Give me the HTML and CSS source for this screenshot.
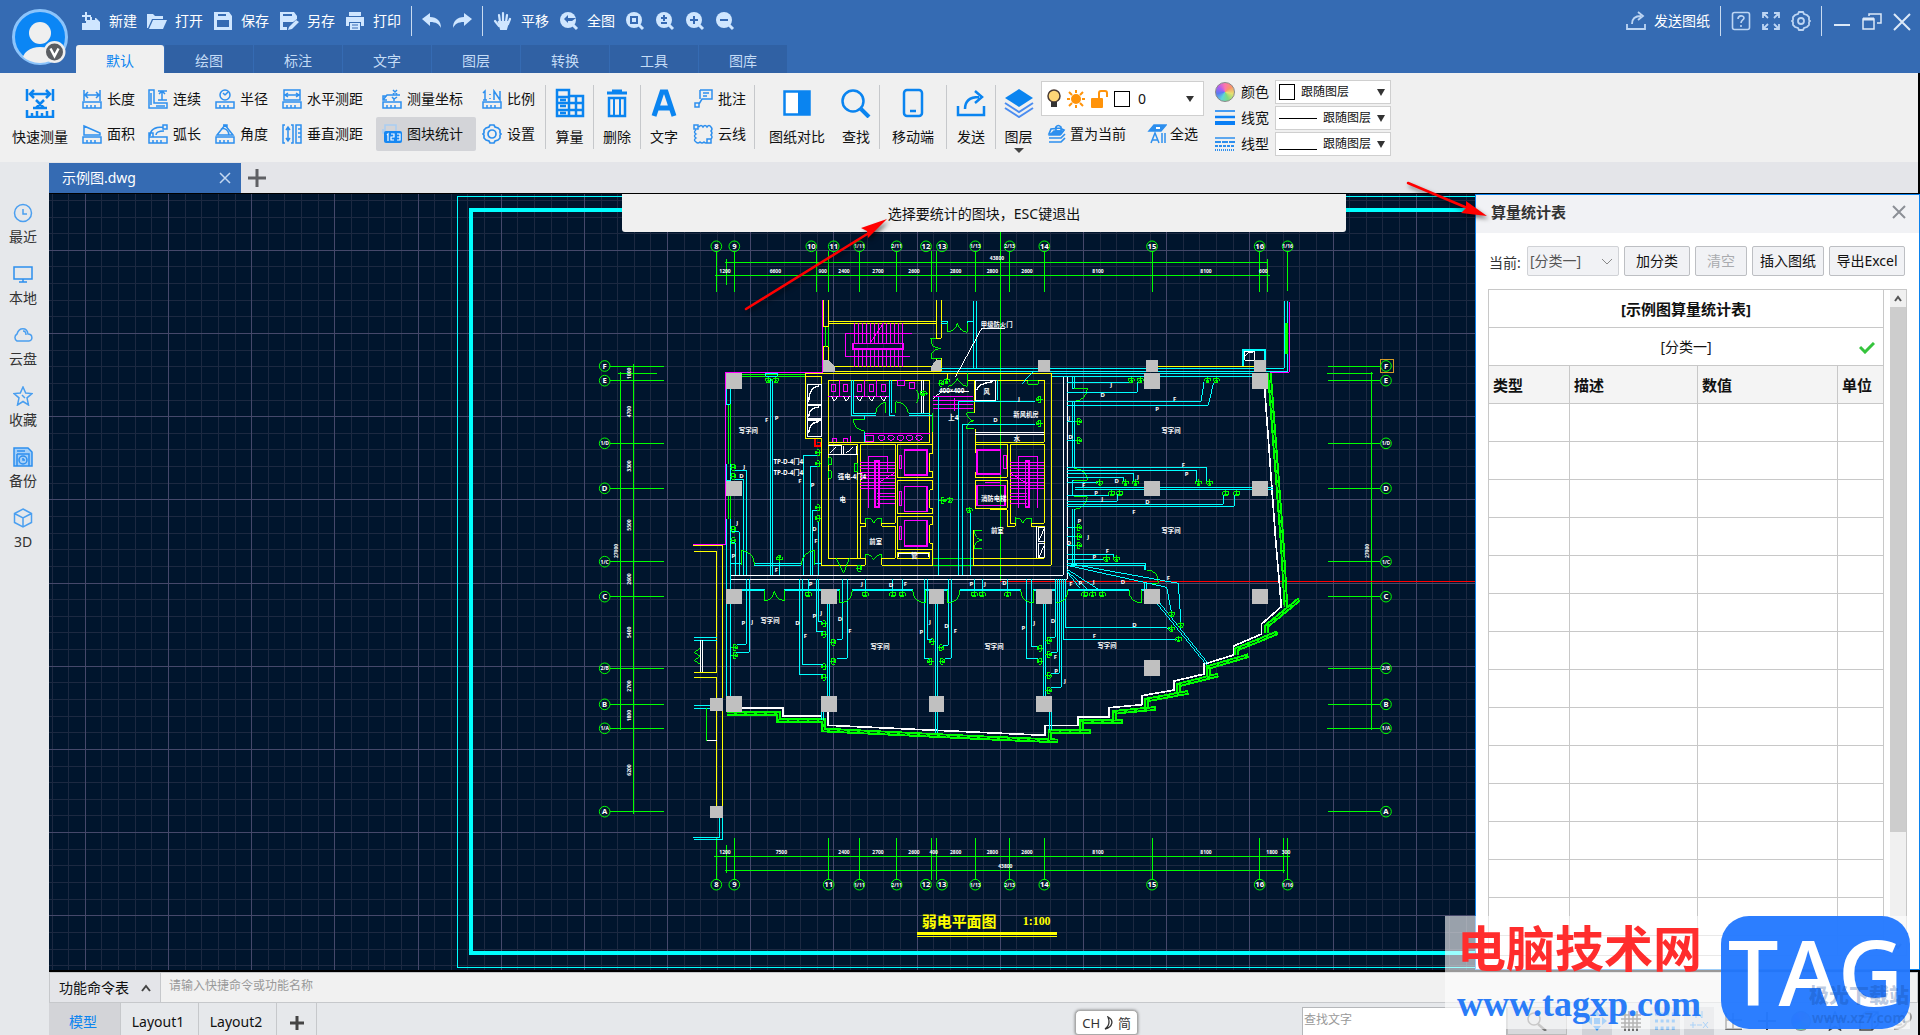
FILE: index.html
```html
<!DOCTYPE html>
<html lang="zh-Hans">
<head>
  <meta charset="UTF-8">
  <title>示例图.dwg</title>
  <link rel="stylesheet" href="styles.css">
</head>
<body>

  <header class="header">
    <div class="avatar">
      <svg width="58" height="58" viewBox="0 0 58 58">
        <defs><clipPath id="face"><circle cx="29" cy="29" r="26"/></clipPath></defs>
        <circle cx="29" cy="29" r="26.5" fill="#0b86f5" stroke="#8cc4fb" stroke-width="3"/>
        <g clip-path="url(#face)" fill="#efefef"><circle cx="29" cy="25" r="11"/><path d="M11 55C11 44 19 39 29 39s18 5 18 16z"/></g>
        <circle cx="43.500" cy="44" r="11" fill="#efefef"/><circle cx="43.500" cy="44" r="8.500" fill="#5a5d62"/>
        <path d="M39.500 40.500l4 7.500 4-7.500" fill="none" stroke="#fff" stroke-width="2.500"/>
      </svg>
    </div>
    <div class="header-main">
      <div class="quick-bar">
        <button class="quick"><svg class="icon" viewBox="0 0 20 20" fill="#cfe6ff"><path d="M9 6h2v3h3V7h1l4 4v8H1v-7h4V9h4z"/><path d="M5 1v9M1 5h9" stroke="#cfe6ff" stroke-width="2"/></svg>新建</button>
        <button class="quick"><svg class="icon" viewBox="0 0 20 20" fill="#cfe6ff"><path d="M0 3h6l2 2h8v3H5L1 17H0z"/><path d="M6 9h14l-4 9H2z"/></svg>打开</button>
        <button class="quick"><svg class="icon" viewBox="0 0 20 20" fill="#cfe6ff"><path fill-rule="evenodd" d="M1 1h15l3 4v14H1zM4 9v7h12V9zM5 3v2h8V3z"/></svg>保存</button>
        <button class="quick"><svg class="icon" viewBox="0 0 20 20" fill="#cfe6ff"><path fill-rule="evenodd" d="M1 1h14l3 4v3l-4 3H4v5h4v3H1zM4 3v2h9V3z"/><path d="M10 16l7-7 3 2-7 7-4 1z"/></svg>另存</button>
        <button class="quick"><svg class="icon" viewBox="0 0 20 20" fill="#cfe6ff"><path d="M4 1h12v4H4zM1 6h18v9h-3v-4H4v4H1zM5 12h10v7H5z"/><path d="M7 14h6M7 17h6" stroke="#3569b3"/></svg>打印</button>
        <span class="quick-sep"></span>
        <button class="quick" title="撤销"><svg class="icon" viewBox="0 0 20 20" fill="#cfe6ff"><path d="M0 8l8-6v4c7 0 11 4 11 11-2-4-5-6-11-6v4z"/></svg></button>
        <button class="quick" title="重做"><svg class="icon" viewBox="0 0 20 20" fill="#cfe6ff"><path d="M20 8l-8-6v4C5 6 1 10 1 17c2-4 5-6 11-6v4z"/></svg></button>
        <span class="quick-sep"></span>
        <button class="quick"><svg class="icon" viewBox="0 0 20 20" stroke="#cfe6ff" stroke-width="2.200" stroke-linecap="round"><path d="M6 4l1 7M10 2v8M14 4l-1 7M17 8l-2 5M2 10l4 5" fill="none"/><path d="M6 11h9l-2 7H8z" fill="#cfe6ff"/></svg>平移</button>
        <button class="quick"><svg class="icon" viewBox="0 0 20 20"><circle cx="9" cy="9" r="8" fill="#cfe6ff"/><path d="M14 14l4 4" stroke="#cfe6ff" stroke-width="3"/><path d="M17 7H9V4L5 8l4 4v-2h4" fill="#3569b3"/></svg>全图</button>
        <button class="quick" title="窗口缩放"><svg class="icon" viewBox="0 0 20 20"><circle cx="9" cy="9" r="8" fill="#cfe6ff"/><path d="M14 14l4 4" stroke="#cfe6ff" stroke-width="3"/><path d="M6 6h6v6H6z" fill="none" stroke="#3569b3" stroke-width="2"/></svg></button>
        <button class="quick" title="实时缩放"><svg class="icon" viewBox="0 0 20 20"><circle cx="9" cy="9" r="8" fill="#cfe6ff"/><path d="M14 14l4 4" stroke="#cfe6ff" stroke-width="3"/><path d="M6 7h6M9 4v6M6 12h6" stroke="#3569b3" stroke-width="2"/></svg></button>
        <button class="quick" title="放大"><svg class="icon" viewBox="0 0 20 20"><circle cx="9" cy="9" r="8" fill="#cfe6ff"/><path d="M14 14l4 4" stroke="#cfe6ff" stroke-width="3"/><path d="M5 9h8M9 5v8" stroke="#3569b3" stroke-width="2"/></svg></button>
        <button class="quick" title="缩小"><svg class="icon" viewBox="0 0 20 20"><circle cx="9" cy="9" r="8" fill="#cfe6ff"/><path d="M14 14l4 4" stroke="#cfe6ff" stroke-width="3"/><path d="M5 9h8" stroke="#3569b3" stroke-width="2"/></svg></button>

        <div class="window-bar">
          <button class="quick"><svg class="icon" viewBox="0 0 20 20" fill="none" stroke="#bdd5f3" stroke-width="1.800"><path d="M1 13v5h18v-5M6 13c0-5 3-8 9-8M12 1l5 4-5 4"/></svg>发送图纸</button>
          <span class="quick-sep"></span>
          <button class="quick" title="帮助"><svg class="icon" viewBox="0 0 20 20" fill="none" stroke="#bdd5f3" stroke-width="1.600"><rect x="1.500" y="1.500" width="17" height="17" rx="2"/><path d="M7 8c0-4 6-4 6-1 0 2-3 2-3 5M10 14v2"/></svg></button>
          <button class="quick" title="全屏"><svg class="icon" viewBox="0 0 20 20" fill="none" stroke="#bdd5f3" stroke-width="1.800"><path d="M2 7V2h5M13 2h5v5M18 13v5h-5M7 18H2v-5M2 2l5 5M18 2l-5 5M18 18l-5-5M2 18l5-5"/></svg></button>
          <button class="quick" title="设置"><svg class="icon" viewBox="0 0 20 20" fill="none" stroke="#bdd5f3" stroke-width="1.800"><path d="M8 1h4l1 2 3 1 2 2v3l1 1-1 1v3l-2 2-3 1-1 2H8l-1-2-3-1-2-2v-3l-1-1 1-1V6l2-2 3-1z"/><circle cx="10" cy="10" r="3"/></svg></button>
          <span class="quick-sep"></span>
          <button class="quick" title="最小化"><svg class="icon" viewBox="0 0 20 20" stroke="#dce9f8" stroke-width="2"><path d="M2 14h16"/></svg></button>
          <button class="quick" title="还原"><svg class="icon" viewBox="0 0 20 20" fill="none" stroke="#dce9f8" stroke-width="1.500"><path d="M1 8h11v10H1zM7 5V3h12v9h-4"/><path d="M1 8h11" stroke-width="3"/></svg></button>
          <button class="quick" title="关闭"><svg class="icon" viewBox="0 0 20 20" stroke="#dce9f8" stroke-width="2"><path d="M2 3l16 16M18 3L2 19"/></svg></button>
        </div>
      </div>
      <nav class="menu-tabs">
        <a href="#" class="menu-tab active">默认</a>
        <a href="#" class="menu-tab">绘图</a>
        <a href="#" class="menu-tab">标注</a>
        <a href="#" class="menu-tab">文字</a>
        <a href="#" class="menu-tab">图层</a>
        <a href="#" class="menu-tab">转换</a>
        <a href="#" class="menu-tab">工具</a>
        <a href="#" class="menu-tab">图库</a>
      </nav>
    </div>
  </header>

  <div class="ribbon">
    <button class="big wide first"><svg class="big-icon" viewBox="0 0 30 30" fill="none" stroke="#0a84f0" stroke-width="2.500"><path d="M2 1v12M28 1v12M5 6h20M9 2L5 6l4 4M21 2l4 4-4 4M11 12l8 8M19 12l-8 8M8 20h14" /><path d="M2 22v7h26v-7M7 29v-4M12 29v-6M17 29v-4M22 29v-6"/></svg>快速测量</button>

    <div class="tools measure">
      <button class="tool"><svg class="icon" viewBox="0 0 20 20" fill="none" stroke="#2d8fee" stroke-width="1.500"><path d="M2 1v11M18 1v11M3 6h14M6 3L3 6l3 3M14 3l3 3-3 3M1 13h18v6H1zM5 16v3M9 16v3M13 16v3"/></svg>长度</button>
      <button class="tool"><svg class="icon" viewBox="0 0 20 20" fill="none" stroke="#2d8fee" stroke-width="1.500"><path d="M1 1h5v13h13v5H1zM10 2h9M14 2v9M10 11h9M11 5l3-3 3 3M3 4v12M8 17h9"/></svg>连续</button>
      <button class="tool"><svg class="icon" viewBox="0 0 20 20" fill="none" stroke="#2d8fee" stroke-width="1.500"><circle cx="10" cy="6" r="5"/><path d="M10 6l3-3M8 4l2 2M1 13h18v6H1zM5 16v3M9 16v3M13 16v3"/></svg>半径</button>
      <button class="tool"><svg class="icon" viewBox="0 0 20 20" fill="none" stroke="#2d8fee" stroke-width="1.500"><path d="M2 1v10h16V1zM3 6h14M6 4L3 6l3 2M14 4l3 2-3 2M1 13h18v6H1zM5 16v3M9 16v3M13 16v3"/></svg>水平测距</button>
      <button class="tool"><svg class="icon" viewBox="0 0 20 20" fill="none" stroke="#2d8fee" stroke-width="1.500"><path d="M1 11l4-5h13M4 7H1v4h4M11 1l4 4M15 1l-4 4M10 8l2 2 3-2M12 10v2M1 13h18v6H1zM5 16v3M9 16v3M13 16v3"/></svg>测量坐标</button>
      <button class="tool"><svg class="icon" viewBox="0 0 20 20" fill="none" stroke="#2d8fee" stroke-width="1.500"><path d="M1 4l2-2v9M1 11h4M8 5v1M8 9v1M12 11V2l6 9V2M1 13h18v6H1zM5 16v3M9 16v3M13 16v3"/></svg>比例</button>
      <button class="tool"><svg class="icon" viewBox="0 0 20 20" fill="none" stroke="#2d8fee" stroke-width="1.500"><path d="M2 11V2l16 7v2zM1 13h18v6H1zM5 16v3M9 16v3M13 16v3"/></svg>面积</button>
      <button class="tool"><svg class="icon" viewBox="0 0 20 20" fill="none" stroke="#2d8fee" stroke-width="1.500"><path d="M2 12C2 5 7 3 15 3M15 1v4h4V1zM1 9h4v4H1zM8 11c0-3 3-4 8-4M1 13h18v6H1zM5 16v3M9 16v3M13 16v3"/></svg>弧长</button>
      <button class="tool"><svg class="icon" viewBox="0 0 20 20" fill="none" stroke="#2d8fee" stroke-width="1.500"><path d="M10 1L2 11h16zM6 5c4-2 8 2 8 6M8 1h4v3M1 13h18v6H1zM5 16v3M9 16v3M13 16v3"/></svg>角度</button>
      <button class="tool"><svg class="icon" viewBox="0 0 20 20" fill="none" stroke="#2d8fee" stroke-width="1.500"><path d="M3 1H1v18h2M9 1h2v18H9M6 3v14M4 6l2-3 2 3M4 14l2 3 2-3M14 1h5v18h-5zM16 5h3M16 9h3M16 13h3"/></svg>垂直测距</button>
      <button class="tool selected"><svg class="icon" viewBox="0 0 20 20" fill="none"><path d="M3 8V1h11v7M1 5v4h3" stroke="#a9cdf2" stroke-width="1.500"/><rect x="2" y="7" width="18" height="12" rx="2" fill="#1687f2"/><path d="M5 11l1-1v7M9 10h3v3H9v3h3M15 10h3v6h-3M15 13h3" stroke="#fff" stroke-width="1.200"/></svg>图块统计</button>
      <button class="tool"><svg class="icon" viewBox="0 0 20 20" fill="none" stroke="#2d8fee" stroke-width="1.700"><path d="M8 1h4l1 2 3 1 2 2v3l1 1-1 1v3l-2 2-3 1-1 2H8l-1-2-3-1-2-2v-3l-1-1 1-1V6l2-2 3-1z"/><circle cx="10" cy="10" r="4"/></svg>设置</button>
    </div>

    <span class="sep"></span>
    <button class="big count"><svg class="big-icon" viewBox="0 0 30 30" fill="none" stroke="#0a84f0" stroke-width="2.500"><path d="M2 2h12v26H2zM14 8h14v20H14M2 9h12M2 15h26M2 22h26M5 12h6M5 18h6M5 25h6M21 8v20"/></svg>算量</button>
    <span class="sep"></span>
    <button class="big"><svg class="big-icon" viewBox="0 0 30 30" fill="none" stroke="#0a84f0" stroke-width="3"><path d="M5 5h20M10 3h10"/><path d="M7 10v18h16V10z" stroke-width="2.500"/><path d="M12 10v18M18 10v18" stroke-width="2"/></svg>删除</button>
    <span class="sep"></span>
    <button class="big"><svg class="big-icon" viewBox="0 0 30 30" fill="none" stroke="#0a84f0" stroke-width="5"><path d="M5 28l8-24h4l8 24M8 20h14"/></svg>文字</button>
    <div class="tools notes">
      <button class="tool"><svg class="icon" viewBox="0 0 20 20" fill="none" stroke="#2d8fee" stroke-width="1.500"><path d="M7 1h12v9H9L6 15M7 1v9M10 4h6M10 7h4M2 14h4v4H2z"/></svg>批注</button>
      <button class="tool"><svg class="icon" viewBox="0 0 20 20" fill="none" stroke="#2d8fee" stroke-width="1.500"><path d="M1 1h4v4H1zM6 3q2-3 4 0q2-3 4 0q2-3 4 0q2 2 0 4q2 2 0 4q2 2 0 4M3 6q-3 2 0 4q-3 2 0 4q-3 2 0 4q2 2 4 0q2 2 4 0q2 2 3 0M14 15h4v4h-4z"/></svg>云线</button>
    </div>
    <span class="sep"></span>
    <button class="big wide"><svg class="big-icon" viewBox="0 0 30 30"><path d="M2.500 3.500h25v23h-25z" fill="#fff" stroke="#0a84f0" stroke-width="2.500"/><path d="M16 3h12v24H16z" fill="#0a84f0"/></svg>图纸对比</button>
    <button class="big"><svg class="big-icon" viewBox="0 0 30 30" fill="none" stroke="#0a84f0" stroke-width="2.500"><circle cx="12" cy="13" r="10.500"/><path d="M20 21l8 8" stroke-width="4"/></svg>查找</button>
    <span class="sep"></span>
    <button class="big phone"><svg class="big-icon" viewBox="0 0 30 30" fill="none" stroke="#0a84f0" stroke-width="2.500"><rect x="6" y="2" width="18" height="26" rx="3"/><path d="M12 23h6"/></svg>移动端</button>
    <span class="sep"></span>
    <button class="big send"><svg class="big-icon" viewBox="0 0 30 30" fill="none" stroke="#0a84f0" stroke-width="2.500"><path d="M2 18v9h26v-9M9 21c0-8 5-12 14-12M19 3l7 6-7 6"/></svg>发送</button>
    <span class="sep"></span>
    <button class="big layer"><svg class="big-icon" viewBox="0 0 30 30"><path d="M15 1l14 9-14 9L1 10z" fill="#0a84f0"/><path d="M1 15l14 9 14-9M1 20l14 9 14-9" fill="none" stroke="#4b8df0" stroke-width="2"/></svg>图层<svg class="more" width="10" height="5" viewBox="0 0 10 5"><path d="M0 0h10L5 5z" fill="#444"/></svg></button>

    <div class="layer-tools">
      <div class="layer-box">
        <svg width="16" height="20" viewBox="0 0 16 20"><circle cx="8" cy="7" r="6" fill="#ffd777" stroke="#4b3b33" stroke-width="1.500"/><path d="M5 13h6v5H5z" fill="#333"/></svg>
        <svg width="18" height="20" viewBox="0 0 18 20"><circle cx="9" cy="10" r="5" fill="#ff930a"/><path d="M9 1v3M9 16v3M0 10h3M15 10h3M2 3l3 3M13 14l3 3M16 3l-3 3M2 17l3-3" stroke="#ff930a" stroke-width="2"/></svg>
        <svg width="19" height="20" viewBox="0 0 19 20"><rect x="1" y="9" width="12" height="10" rx="1" fill="#ff930a"/><path d="M9 9V4q0-2 2-2h4q2 0 2 2v4" fill="none" stroke="#ff930a" stroke-width="2"/></svg>
        <span class="swatch"></span>
        <select aria-label="图层"><option>0</option></select>
        <svg class="drop" width="8" height="6" viewBox="0 0 8 6"><path d="M0 0h8L4 6z" fill="#333"/></svg>
      </div>
      <div class="layer-actions">
        <button class="tool"><svg class="icon" viewBox="0 0 20 20" fill="none" stroke="#2d8fee" stroke-width="1.700"><path d="M2 18h12l4-4M2 14h12l4-4M2 10h12l3-4-4-2-9 1zM9 7V3q2-3 5 0v4z"/><path d="M3 11l4-4h9l-3 4z" fill="#2d8fee"/></svg>置为当前</button>
        <button class="tool"><svg class="icon" viewBox="0 0 20 20" fill="none" stroke="#2d8fee" stroke-width="1.500"><path d="M2 7l5-6h12l-5 6z" fill="#2d8fee"/><path d="M9 4h4" stroke="#fff" stroke-width="2"/><path d="M4 19l4-10 4 10M5 16h6M15 9v10M18 9v10"/></svg>全选</button>
      </div>
    </div>

    <div class="props">
      <span class="color-wheel"></span>
      <label for="propColor">颜色</label>
      <div class="prop-box"><span class="swatch"></span><select id="propColor"><option>跟随图层</option></select><svg class="drop" width="8" height="8" viewBox="0 0 8 8"><path d="M0 1h8L4 8z" fill="#333"/></svg></div>
      <svg class="icon" viewBox="0 0 20 20" stroke="#0a7ff5"><path d="M0 3h20" stroke-width="1.500"/><path d="M0 9h20" stroke-width="2.500"/><path d="M0 15h20" stroke-width="4"/></svg>
      <label for="propWidth">线宽</label>
      <div class="prop-box"><span class="line-sample"></span><select id="propWidth"><option>跟随图层</option></select><svg class="drop" width="8" height="8" viewBox="0 0 8 8"><path d="M0 1h8L4 8z" fill="#333"/></svg></div>
      <svg class="icon" viewBox="0 0 20 20" stroke="#2d8fee"><path d="M0 4h20" stroke-width="1.500"/><path d="M0 8h20" stroke-width="2" stroke-dasharray="6 1"/><path d="M0 12h20" stroke-width="2" stroke-dasharray="3 1"/><path d="M0 16h20" stroke-width="2" stroke-dasharray="1 1"/></svg>
      <label for="propType">线型</label>
      <div class="prop-box"><span class="line-sample low"></span><select id="propType"><option>跟随图层</option></select><svg class="drop" width="8" height="8" viewBox="0 0 8 8"><path d="M0 1h8L4 8z" fill="#333"/></svg></div>
    </div>
  </div>

  <div class="workspace">
    <nav class="sidebar">
      <a href="#"><svg class="icon" viewBox="0 0 20 20" fill="none" stroke="#4b9ff0" stroke-width="1.500"><circle cx="10" cy="10" r="8.500"/><path d="M10 6v5h4"/></svg>最近</a>
      <a href="#"><svg class="icon" viewBox="0 0 20 20" fill="none" stroke="#2d8fee" stroke-width="1.500"><path d="M1 3h18v12H1zM6 18h8M10 15v3"/></svg>本地</a>
      <a href="#"><svg class="icon" viewBox="0 0 20 20" fill="none" stroke="#4b9ff0" stroke-width="1.500"><path d="M4 16a4 4 0 0 1 0-7C6 2 14 2 15 9c5 0 5 7 1 7z"/><path d="M10 6q3 0 3 4"/></svg>云盘</a>
      <a href="#"><svg class="icon" viewBox="0 0 20 20" fill="none" stroke="#4b9ff0" stroke-width="1.500"><path d="M10 1l2.700 6 6.300.6-5 4.300L15.500 19 10 15.500 4.500 19 6 11.900 1 7.600 7.300 7z"/><path d="M9 9l3 3"/></svg>收藏</a>
      <a href="#"><svg class="icon" viewBox="0 0 20 20" fill="none" stroke="#2d8fee" stroke-width="1.500"><path d="M1 1h14l4 4v14H1z" fill="#a4cff8"/><path d="M4 7h12v12M4 7v12M4 4h8"/><circle cx="10" cy="13" r="4"/><path d="M10 11v2h2"/></svg>备份</a>
      <a href="#"><svg class="icon" viewBox="0 0 20 20" fill="none" stroke="#4b9ff0" stroke-width="1.500"><path d="M10 1l8.500 4.500v9L10 19l-8.500-4.500v-9zM1.500 5.500L10 10l8.500-4.500M10 10v9"/></svg>3D</a>
    </nav>

    <div class="main">
      <div class="doc-tabs">
        <a href="#" class="doc-tab">示例图.dwg<svg width="12" height="12" viewBox="0 0 12 12" stroke="#c5d8f0" stroke-width="1.500"><path d="M1 1l10 10M11 1L1 11"/></svg></a>
        <button class="new-doc" title="新建"><svg width="18" height="18" viewBox="0 0 18 18" stroke="#5f6064" stroke-width="3"><path d="M9 0v18M0 9h18"/></svg></button>
      </div>

      <div class="stage">
        <div class="canvas">
          <svg class="drawing" viewBox="49 194 1426 776" preserveAspectRatio="xMinYMin slice">
            <g id="grid"></g>
            <path class="c" d="M1500 196.500H457.500V967.500H1500"/>
            <path class="c" stroke-width="4" d="M1500 210H471V953H1500"/>

            <!-- 平面图：3 个单位为 1 像素，原点在左上 -->
            <g id="plan" transform="translate(570 190) scale(.33333)" stroke-width="3">
              <!-- 轴线 -->
              <path class="g" d="M439 184V305M493 184V305M470 208V285M739 184V305M775 184V305M868 184V305M980 184V305M1084 184V305M1099 184V305M1216 184V305M1318 184V305M1423 184V305M1747 184V305M2068 184V305M2092 208V305M2153 184V302M466 217H2095M436 256H2100"/>
              <path class="g" d="M120 529H282M145 550H260M120 571H282M120 760H282M120 895H282M120 1115H282M120 1219H282M120 1435H282M120 1543H282M120 1615H282M120 1865H282M151 545V1620M190 522V1872"/>
              <path class="g" d="M2274 529H2430M2271 550H2410M2274 571H2430M2274 760H2430M2274 895H2430M2274 1115H2430M2274 1219H2430M2274 1435H2430M2274 1543H2430M2271 1615H2430M2274 1865H2430M2404 547V1620"/>
              <path class="g" d="M439 1944V2070M493 1944V2070M470 1965V2048M775 1944V2070M868 1944V2070M980 1944V2070M1084 1944V2070M1099 1944V2070M1216 1944V2070M1318 1944V2070M1423 1944V2070M1747 1944V2070M2068 1944V2070M2141 1944V2048M2153 1944V2070M432 1999H2160M466 2041H2145"/>
              <path class="g" d="M1291 125V1177"/>
              <path class="r" d="M1291 1176H2730"/>

              <!-- 外立面 -->
              <path class="g" stroke-width="14" d="M470 1570H625V1592H760V1620L1230 1643L1465 1653M1440 1650V1624H1562M1535 1618V1595H1658M1633 1590V1567L1758 1555M1730 1550V1530L1855 1507M1825 1507V1485L1945 1455M1915 1458V1432L2035 1397M2000 1395V1378L2123 1328M2090 1330V1308L2188 1228"/>
              <path class="g" stroke-width="14" d="M2098 549L2136 1050L2148 1252"/>
              <path class="hatch" d="M470 1570H625V1592H760V1620L1230 1643L1465 1653M1440 1650V1624H1562M1535 1618V1595H1658M1633 1590V1567L1758 1555M1730 1550V1530L1855 1507M1825 1507V1485L1945 1455M1915 1458V1432L2035 1397M2000 1395V1378L2123 1328M2090 1330V1308L2188 1228M2098 549L2136 1050L2148 1252"/>
              <path class="w" stroke-width="5" d="M516 1555H640V1578H755M774 1566V1606L1230 1627L1425 1636V1607H1524V1582H1618V1553L1716 1544V1517L1813 1500V1473L1903 1452V1422L1991 1395V1368L2075 1332V1302L2134 1250L2117 1050L2084 597"/>

              <!-- 外墙 -->
              <path class="m" d="M758 330V547H467V1064H370M2158 337V547H2100"/>
              <path class="y" d="M370 1066H458V1850M372 1084H440V1447H372M372 1462H440V1850"/>
              <path class="c" d="M372 1342H440M372 1351H440M372 1546H423M372 1555H423M449 1884V1942H370M458 1884V1948H372"/>
              <path class="w" d="M391 1351V1447M397 1351V1447M410 1652H440"/>
              <path class="g" d="M391 1375l-18 12 18 12-18 12 18 12M410 1555V1652"/>
              <path class="y" d="M760 330V410H775V330M775 394H1099M775 400H1099M1099 330V445H1114V330M760 545V470H775V529H1099V505H1114V545H760M1764 529H2055M1760 545H2050"/>
              <path class="g" d="M766 410V470M775 410V470M515 553H706M515 559H706M475 643V823M481 643V823M475 917V988M481 917V988"/>
              <path class="c" d="M1210 334V535M1219 334V535M1114 394H1133V400H1114M1192 400V394H1210M1114 535H2143V334M1114 545H2152V334M469 595V643H481V595M469 823V872H481V823M469 988V1520M481 988V1520M587 550H622V559H587ZM1444 550H2046M1444 559H2046"/>
              <path class="c" stroke-width="5" d="M2020 529V480H2086V510"/>
              <path class="g" stroke-width="8" d="M2149 398V492"/>
              <path class="w" d="M2024 484H2053V511H2024ZM2024 500Q2030 486 2050 486"/>
              <path class="w" d="M1480 560V1156H484M1492 560V1168H484"/>
              <path class="w" d="M1157 560L1235 415H1305M1090 625L1115 605H1197"/>

              <!-- 核心筒 -->
              <path class="y" d="M706 550H1444V1126H1210V1105M706 550V745H754V1126H886V1105H775V571H1079V757H775M706 559H754V583M1133 550V571M1192 550V571H1423V757H1216M775 763H863V1105M871 763H976V1000H936V1009H976V1105H936V1126H1088V1060M871 763V1000H887V1009H871V1105M982 763H1088V790H1079V845H1088V862H982ZM982 871H1088V900H1079V955H1088V970H982ZM982 979H1088V1005H1079V1060H1088V1078H982ZM982 1087H1079V1105H982ZM1079 757V610M1088 725V763"/>
              <path class="y" d="M1213 571V668M1216 716V790M1216 763H1312V862H1216V845M1216 871H1312V955H1216ZM1321 763H1423V1000H1384V1009H1423V1105H1210V1023H1225M1321 763V1000H1336V1009H1312V960H1260"/>
              <path class="m" d="M853 400V460M865 400V460M877 400V460M889 400V460M901 400V460M913 400V460M925 400V460M937 400V460M949 400V460M961 400V460M973 400V460M985 400V460M998 400V460M853 478V530M865 478V530M877 478V530M889 478V530M901 478V530M913 478V530M925 478V530M937 478V530M949 478V530M961 478V530M973 478V530M985 478V530M998 478V530M900 432H826V499H1020M910 430H1025M900 460L940 400"/>
              <path class="m" stroke-width="5" d="M850 461H1000V477H850Z"/>
              <path class="m" d="M871 817H976M871 827H976M871 837H976M871 847H976M871 857H976M871 867H976M871 877H976M871 887H976M871 897H976M921 910H976M921 920H976M921 930H976M921 940H976M895 955V799H952V850M930 875L972 850"/>
              <path class="m" d="M1321 817H1423M1321 827H1423M1321 837H1423M1321 847H1423M1321 857H1423M1321 867H1423M1321 877H1423M1321 887H1423M1321 897H1423M1321 910H1370M1321 920H1370M1321 930H1370M1321 940H1370M1345 955V799H1402V955M1322 850L1370 880"/>
              <path class="m" stroke-width="5" d="M916 814H927V952H916ZM1367 814H1378V952H1367ZM1004 780H1072V855H1004ZM1004 890H1072V965H1004ZM1004 992H1072V1068H1004ZM1222 780H1292V853H1222ZM1222 887H1305V947H1222Z"/>
              <path class="m" d="M988 796H995V836H988ZM988 906H995V946H988ZM988 1010H995V1050H988ZM1300 796H1309V836H1300ZM1245 878H1290M1090 619H1209M1090 631H1209M1090 643H1209M1090 655H1209M1153 625V662"/>
              <path class="m" d="M784 583H798V605H784ZM820 583H834V605H820ZM862 583H876V605H862ZM898 583H912V605H898ZM934 583H948V605H934ZM775 619H844M850 619H958M810 571V619M883 571V619M920 571V619M982 571H1004V586H982ZM1018 577H1033V597H1018ZM885 757V730H1079M888 736H910V756H888ZM841 738V757M788 757V745H801V757M820 757V745H833V757"/>
              <path class="m" d="M925 743a10 8 0 1 0 20 0a10 8 0 1 0-20 0M953 743a10 8 0 1 0 20 0a10 8 0 1 0-20 0M981 743a10 8 0 1 0 20 0a10 8 0 1 0-20 0M1009 743a10 8 0 1 0 20 0a10 8 0 1 0-20 0M1037 743a10 8 0 1 0 20 0a10 8 0 1 0-20 0"/>
              <path class="c" d="M844 571V676H917M850 571V670H917M958 571V676H975M964 571V670M1017 670H1079M1017 676H1085M885 676V690M885 725V755M712 643H754M1276 571V631M1282 571V631"/>
              <path class="w" d="M784 619l9 15 9-15M820 619l9 15 9-15M860 619l9 15 9-15M896 619l9 15 9-15M932 619l9 15 9-15M1055 571V670M1061 571V670M775 795H863M775 768H815V795M822 768V795H860V768M780 790L800 770M828 790L850 770M1216 727H1423M1216 733H1423M1400 1009V1105M1405 1012H1423V1055H1405ZM1405 1060H1423V1102H1405ZM1408 1050L1423 1015M1408 1100L1423 1065M985 1102V1090H1075V1102"/>
              <path class="w" stroke-width="4" d="M712 584H754V643H712ZM712 647H754V687H712ZM712 691H754V740H712ZM716 635Q718 590 748 588M716 680Q718 652 748 651M716 730Q718 696 748 695M1217 571H1276V631H1217ZM1220 600Q1225 580 1270 575"/>
              <path class="r" stroke-width="5" d="M735 748V768H752V758H740"/>
              <path class="g" d="M917 670Q920 640 948 637V670M978 670V635Q1012 640 1015 670M886 688H850Q850 718 886 724M1133 400V425Q1155 425 1162 400Q1170 425 1192 427V400M1133 589Q1155 585 1162 565Q1170 585 1192 589V550M1099 445H1083Q1080 475 1112 475Q1080 480 1083 505H1112M887 1000V984Q905 982 911 1000Q917 982 936 984V1000M1336 1000V984Q1354 982 1358 1000Q1364 982 1384 984V1000M887 1105V1093Q905 1095 911 1110Q917 1095 936 1093V1105M799 1105L821 1150L838 1105M1213 668H1190Q1190 690 1213 692Q1190 694 1190 716H1213M1237 1023H1213Q1215 1048 1237 1050Q1215 1052 1213 1075H1237M1040 600Q1050 615 1040 640M1050 612H1075M1088 1105H1210M1088 1126H1210M1088 670V725M776 803H784V825H776ZM776 842H784V865H776ZM853 820H862V845H853ZM1373 572H1405V583H1373Z"/>

              <!-- 左侧及走廊管线 -->
              <path class="c" d="M601 568V1155M607 568V1155M490 841H529V1155M490 868H520V1155M487 1025H508V1155M487 1058H496V1155M740 796H700V1155M740 829H721V1155M740 961H727V1155M745 992V1155M1105 622V1155M1165 634V1155M1177 703V1155M1201 970V1155M1165 634H1396M1177 703H1396M1354 583L1390 545M628 1115V1155M481 1120H515M553 1120H694M553 1126H694M733 1120H754"/>

              <!-- 南侧房间 -->
              <path class="c" stroke-width="6" d="M516 1200H585M643 1200H753M801 1200H810M847 1200H1028M1063 1200H1077M1122 1200H1134M1170 1200H1352M1390 1200H1398M1446 1200H1458M1494 1200H1677M1714 1200H1722"/>
              <path class="c" d="M772 1242V1518M778 1242V1518M1096 1242V1628M1102 1242V1628M1420 1242V1518M1426 1242V1518M1438 1566V1620M1444 1566V1620M754 1566V1590M760 1566V1590"/>
              <path class="c" d="M529 1168V1363H502M538 1168V1387H490M688 1168V1453H760M697 1168V1423H760M739 1168V1324H760M745 1168V1295H757M817 1168V1348H800M832 1168V1405H800M1063 1168V1405H1078M1072 1168V1348H1085M1144 1168V1405H1126M1135 1168V1366H1120M715 1168V1210M886 1168V1210M969 1168V1210M997 1168V1210M1213 1168V1210M1237 1168V1210M1313 1168V1210M1369 1168V1405H1405M1384 1168V1369H1405M1456 1168V1342H1438M1462 1168V1387H1444M1468 1168V1450H1444M1474 1168V1492H1444M1480 1168V1348H1820M1486 1168V1312H1770L1800 1315"/>
              <path class="g" d="M515 1125V1080Q555 1090 553 1125M733 1125V1080Q695 1090 694 1125M585 1200V1232Q610 1230 613 1202Q618 1230 643 1232V1200M810 1200V1238Q845 1238 847 1200M1028 1200Q1030 1238 1067 1238V1200M1134 1200V1238Q1168 1238 1170 1200M1352 1200Q1354 1238 1390 1238V1200M1458 1238Q1492 1238 1494 1200M1677 1200Q1678 1238 1714 1238V1200M1730 1140Q1765 1140 1765 1180H1730M1513 595H1552Q1550 630 1513 634M1513 835Q1552 840 1552 871H1513M1513 920H1552Q1548 955 1513 958"/>

              <!-- 东侧房间 -->
              <path class="c" d="M1507 559V595M1513 559V595H1507M1507 832V634H1513V832M1507 916V872H1513M1507 958V1126M1513 958V1126M1492 577H1677M1492 607H1702V577M1492 634H1893L1902 577M1492 646H1915L1930 580M1492 694H1520M1492 751H1520M1492 832H1909V872M1492 841H1879V872M1492 850H1690V872M1492 862H1660V872M1492 877H1584M1514 892H2110M1514 898H2110M1492 916H1618M1492 934H1642V913M1492 943H1960V916M1492 949H1993V916M1492 1012H1520M1492 1039H1520M1492 1066H1520M1492 1093H1630V1105M1492 1108H1600M1492 1120H1727V1140M1492 1126H1723V1140"/>
              <path class="c" d="M1492 1120L1825 1180L1833 1300M1492 1126L1790 1192L1805 1270M1492 1138L1585 1198M1492 1144L1555 1200M1492 1147L1530 1195M1762 1242L1910 1425M1770 1240L1914 1420M1723 1175V1200M1730 1175V1200"/>

              <path fill="none" stroke="#d69b27" d="M2431 508H2471V548H2431Z"/>
              <path class="y" stroke-width="8" d="M1042 2230H1461"/>
              <path class="y" d="M1042 2239H1461"/>
              <text class="plan-title" x="1055" y="2211">弱电平面图</text>
              <text class="plan-title scale" x="1358" y="2206">1:100</text>
            </g>
          </svg>
          <div class="prompt">选择要统计的图块，ESC键退出</div>
        </div>

        <aside class="panel">
          <div class="panel-head">
            <h2>算量统计表</h2>
            <button title="关闭"><svg width="14" height="14" viewBox="0 0 14 14" stroke="#8c8f96" stroke-width="2"><path d="M1 1l12 12M13 1L1 13"/></svg></button>
          </div>
          <div class="panel-tools">
            <label for="category">当前:</label>
            <div class="category-box">
              <select id="category"><option>[分类一]</option></select>
              <svg width="12" height="7" viewBox="0 0 12 7" fill="none" stroke="#888"><path d="M1 1l5 5 5-5"/></svg>
            </div>
            <button class="b-add">加分类</button>
            <button class="b-clear" disabled>清空</button>
            <button class="b-insert">插入图纸</button>
            <button class="b-export">导出Excel</button>
          </div>
          <div class="table-box">
            <div class="table-clip">
              <table>
                <colgroup><col class="c-type"><col class="c-desc"><col class="c-value"><col class="c-unit"></colgroup>
                <thead>
                  <tr><th colspan="4" class="title">[示例图算量统计表]</th></tr>
                  <tr><td colspan="4" class="sub">[分类一]<svg class="tick" width="16" height="12" viewBox="0 0 16 12" fill="none" stroke="#35c43c" stroke-width="3"><path d="M1 5l5 5 9-9"/></svg></td></tr>
                  <tr class="cols"><th>类型</th><th>描述</th><th>数值</th><th>单位</th></tr>
                </thead>
                <tbody id="rows"></tbody>
              </table>
            </div>
            <div class="scrollbar">
              <svg width="16" height="17" viewBox="0 0 16 17" fill="none" stroke="#555" stroke-width="2"><path d="M5 11l3-4 3 4"/></svg>
              <div class="thumb"></div>
              <svg width="16" height="17" viewBox="0 0 16 17" fill="none" stroke="#555" stroke-width="2"><path d="M5 6l3 4 3-4"/></svg>
            </div>
          </div>
        </aside>
      </div>

      <div class="command">
        <button class="command-list">功能命令表<svg width="10" height="8" viewBox="0 0 10 8" fill="none" stroke="#444" stroke-width="2"><path d="M1 7l4-5 4 5"/></svg></button>
        <input type="text" aria-label="命令" placeholder="请输入快捷命令或功能名称">
      </div>

      <div class="status">
        <a href="#" class="layout-tab active">模型</a>
        <a href="#" class="layout-tab">Layout1</a>
        <a href="#" class="layout-tab">Layout2</a>
        <button class="add-layout" title="新建布局"><svg width="14" height="14" viewBox="0 0 14 14" stroke="#444" stroke-width="3"><path d="M7 0v14M0 7h14"/></svg></button>
        <div class="search">
          <input type="text" aria-label="查找文字" placeholder="查找文字">
          <button title="查找"><svg width="20" height="20" viewBox="0 0 20 20" fill="none" stroke="#777" stroke-width="1.500"><circle cx="7" cy="8" r="6"/><path d="M11 13l8 7" stroke-width="2.500"/></svg></button>
        </div>
        <div class="switches">
          <button class="on" title="移动"><svg class="icon" viewBox="0 0 20 20" fill="#2d8fee"><path d="M10 0l4 5H6zM10 20l4-5H6zM0 10l5-4v8zM20 10l-5-4v8zM7 7h6v6H7z"/></svg></button>
          <button title="栅格"><svg class="icon" viewBox="0 0 20 20" stroke="#444" stroke-width="1.500"><path d="M4 0v20M8 0v20M12 0v20M16 0v20M0 4h20M0 8h20M0 12h20M0 16h20"/></svg></button>
          <button class="on" title="捕捉"><svg class="icon" viewBox="0 0 20 20" stroke="#2d8fee" stroke-width="3" stroke-dasharray="3 2.600"><path d="M0 3h20M0 10h20M0 17h20"/></svg></button>
          <button class="on" title="追踪"><svg class="icon" viewBox="0 0 20 20" fill="none" stroke="#2d8fee"><path d="M7 7V0l6 7V0M1 14h6M4 11v6M8 14h5M14 11l5 6M19 11l-5 6"/></svg></button>
          <button title="线宽"><svg class="icon" viewBox="0 0 20 20" fill="none" stroke="#444" stroke-width="1.500"><path d="M3 2v16h16M3 9h16M10 2v16"/></svg></button>
          <button title="十字光标"><svg class="icon" viewBox="0 0 20 20" stroke="#333" stroke-width="2"><path d="M10 1v18M1 10h18"/></svg></button>
          <button title="颜色"><span class="color-wheel"></span></button>
          <button title="收藏"><svg class="icon" viewBox="0 0 20 20" fill="none" stroke="#444" stroke-width="1.500"><path d="M10 1l2.700 6 6.300.6-5 4.300L15.500 19 10 15.500 4.500 19 6 11.900 1 7.600 7.300 7z"/></svg></button>
          <button title="三维"><svg class="icon" viewBox="0 0 20 20" fill="none" stroke="#444" stroke-width="1.500"><path d="M1 6h12v13H1zM1 6l6-5h12v13l-6 5M13 6l6-5"/></svg></button>
          <button title="更多"><svg class="icon" viewBox="0 0 20 20" fill="none" stroke="#999" stroke-width="2"><circle cx="13" cy="6" r="5"/><path d="M1 18c4 0 12-2 12-7M1 10q2 6 8 3"/></svg></button>
        </div>
      </div>
    </div>
  </div>

  <div class="ime">CH <svg width="10" height="14" viewBox="0 0 10 14" fill="none" stroke="#333" stroke-width="1.300"><path d="M4 1c6 3 5 10-3 12 4-3 5-7 3-12z"/></svg> 简</div>

  <!-- 标注箭头 -->
  <svg class="arrows" width="780" height="150" viewBox="730 170 780 150">
    <g class="arrow-shape">
      <path d="M746 309L872 231" stroke="#f00" stroke-width="2.500" stroke-linecap="round"/>
      <path d="M887 219L861 228L867 231L868 238z" fill="#f00"/>
      <path d="M1408 183L1465 207" stroke="#f00" stroke-width="2.500" stroke-linecap="round"/>
      <path d="M1487 216L1466 201V208L1461 213z" fill="#f00"/>
    </g>
  </svg>

  <div class="watermark">
    <div class="site">
      <strong>电脑技术网</strong>
      <span>www.tagxp.com</span>
    </div>
    <div class="tag">TAG<div class="ghost"><b>极光下载站</b><i>www.xz7.com</i></div></div>
  </div>

  <script>
    const NS = 'http://www.w3.org/2000/svg';
    const plan = document.getElementById('plan');

    function add(parent, name, attrs, text) {
      const el = document.createElementNS(NS, name);
      for (const k in attrs) el.setAttribute(k, attrs[k]);
      if (text) el.textContent = text;
      parent.appendChild(el);
      return el;
    }

    // 背景栅格，每五格一条主线
    function drawGrid() {
      const grid = document.getElementById('grid');
      const step = 83.18 / 5;
      let minor = '', major = '';
      for (let i = -2; i < 120; i++) {
        const x = Math.floor(85.3 + i * step) + 0.5;
        const y = Math.floor(250.3 + (i - 2) * step) + 0.5;
        if (i % 5 === 0) major += `M${x} 190V1400`; else minor += `M${x} 190V1400`;
        if ((i - 2) % 5 === 0) major += `M40 ${y}H2600`; else minor += `M40 ${y}H2600`;
      }
      add(grid, 'path', { class: 'minor', d: minor });
      add(grid, 'path', { class: 'major', d: major });
    }

    const bubbles = [
      [439, 169, '8'], [493, 169, '9'], [724, 169, '10'], [791, 169, '11'], [868, 169, '1/11'], [980, 169, '2/11'],
      [1068, 169, '12'], [1116, 169, '13'], [1216, 169, '1/13'], [1319, 169, '2/13'], [1423, 169, '14'],
      [1746, 169, '15'], [2069, 169, '16'], [2153, 169, '1/16'],
      [439, 2084, '8'], [493, 2084, '9'], [776, 2084, '11'], [868, 2084, '1/11'], [980, 2084, '2/11'],
      [1068, 2084, '12'], [1116, 2084, '13'], [1216, 2084, '1/13'], [1319, 2084, '2/13'], [1423, 2084, '14'],
      [1746, 2084, '15'], [2069, 2084, '16'], [2153, 2084, '1/16']
    ];
    const rowNames = [[528, 'F'], [572, 'E'], [760, '1/D'], [895, 'D'], [1115, '1/C'], [1220, 'C'], [1435, '2/B'], [1543, 'B'], [1615, '1/A'], [1865, 'A']];
    rowNames.forEach(([y, t]) => bubbles.push([104, y, t], [2448, y, t]));

    const columns = [
      [467, 549, 49, 48], [467, 873, 49, 44], [1404, 510, 36, 35], [1728, 510, 36, 35], [2052, 510, 36, 35],
      [1722, 549, 48, 48], [2046, 549, 48, 48], [1722, 873, 48, 45], [2046, 873, 48, 45],
      [468, 1197, 48, 45], [753, 1197, 48, 45], [1077, 1197, 45, 45], [1398, 1197, 48, 45], [1722, 1197, 48, 45], [2046, 1197, 48, 45],
      [420, 1524, 39, 39], [468, 1518, 48, 48], [753, 1518, 48, 48], [1077, 1518, 45, 48], [1398, 1518, 48, 48],
      [1722, 1411, 48, 46], [420, 1848, 39, 36]
    ];

    // 插座：x, y, 旋转角
    const outlets = [
      [595, 572, 0], [618, 572, 0], [492, 832, 270], [492, 859, 270], [492, 1018, 270], [492, 1052, 270],
      [742, 788, 90], [742, 821, 90], [742, 953, 90], [742, 985, 90], [628, 1104, 180],
      [1684, 572, 0], [1711, 572, 0], [1913, 572, 0], [1939, 572, 0], [1528, 694, 270], [1528, 751, 270],
      [1590, 880, 0], [1667, 880, 0], [1697, 880, 0], [1886, 880, 0], [1918, 880, 0],
      [1626, 912, 0], [1650, 912, 0], [1968, 912, 0], [2001, 912, 0],
      [1528, 1012, 270], [1528, 1039, 270], [1528, 1066, 270], [1609, 1108, 0], [1639, 1108, 0],
      [1115, 580, 270], [1130, 575, 0], [1060, 612, 0], [1407, 628, 90], [1407, 700, 90], [1198, 962, 0],
      [1120, 932, 270], [1140, 932, 0],
      [715, 1215, 0], [886, 1215, 0], [969, 1215, 0], [997, 1215, 0], [1213, 1215, 0], [1237, 1215, 0], [1313, 1215, 0],
      [1545, 1215, 0], [1568, 1215, 0], [1597, 1215, 0],
      [496, 1372, 270], [496, 1396, 270], [760, 1301, 90], [760, 1333, 90], [792, 1357, 270], [792, 1414, 270],
      [760, 1430, 90], [760, 1462, 90], [1084, 1355, 90], [1115, 1374, 270], [1080, 1414, 90], [1118, 1414, 270],
      [1408, 1375, 90], [1438, 1351, 270], [1438, 1394, 270], [1408, 1414, 90], [1438, 1458, 270], [1438, 1501, 270],
      [1806, 1274, 0], [1833, 1307, 0], [1804, 1318, 0], [1826, 1350, 0], [870, 1135, 270]
    ];

    // 管线编号
    const marks = [
      [590, 690], [620, 684], [523, 832], [514, 859], [690, 873], [728, 884], [502, 998], [733, 1018], [738, 1052], [490, 1098],
      [1624, 586], [1598, 616], [1814, 626], [1761, 657], [1498, 683], [1501, 740], [1840, 824], [1850, 852], [1704, 860],
      [1640, 874], [1541, 884], [1578, 910], [1597, 926], [1732, 935], [1692, 965], [1528, 994], [1555, 1040], [1497, 1058], [1612, 1082],
      [1573, 1102], [1347, 628], [1276, 691], [619, 1141], [722, 1182], [876, 1183], [963, 1185], [1006, 1183], [1204, 1183], [1245, 1183], [1303, 1180],
      [1503, 1182], [1531, 1178], [1571, 1175], [1659, 1175], [1795, 1163], [520, 1298], [547, 1297], [682, 1300], [706, 1339], [733, 1279], [754, 1268],
      [810, 1288], [840, 1324], [1054, 1325], [1080, 1296], [1129, 1308], [1156, 1324], [1360, 1313], [1393, 1300], [1449, 1294], [1456, 1402],
      [1458, 1442], [1485, 1473], [1693, 1304], [1573, 1338]
    ];

    const labels = [
      [535, 728, '写字间'], [1803, 728, '写字间'], [1803, 1030, '写字间'], [600, 1299, '写字间'], [930, 1376, '写字间'], [1272, 1376, '写字间'], [1611, 1374, '写字间'],
      [655, 821, 'TP-D-4门4'], [655, 855, 'TP-D-4门4'], [846, 868, '强电-4门4'], [818, 936, '电'], [917, 1062, '前室'], [1282, 1030, '前室'],
      [1150, 689, '上4'], [1368, 680, '新风机房'], [1341, 752, '水'], [1250, 612, '风'], [1271, 933, '消防电梯'], [1280, 412, '甲级防火门'],
      [1145, 608, '400×400'], [1033, 1104, '管']
    ];

    const dims = [
      [465, 249, '1200'], [616, 249, '6600'], [758, 249, '900'], [822, 249, '2400'], [924, 249, '2700'], [1032, 249, '2600'], [1157, 249, '2800'],
      [1267, 249, '2800'], [1371, 249, '2600'], [1584, 249, '8100'], [1908, 249, '8100'], [2080, 249, '600'], [1281, 210, '43800'],
      [465, 1993, '1200'], [634, 1993, '7500'], [822, 1993, '2400'], [924, 1993, '2700'], [1032, 1993, '2600'], [1091, 1993, '400'], [1157, 1993, '2800'],
      [1267, 1993, '2800'], [1371, 1993, '2600'], [1584, 1993, '8100'], [1908, 1993, '8100'], [2106, 1993, '1800'], [2148, 1993, '300'], [1306, 2034, '43800']
    ];
    const sideDims = [[184, 550, '1000'], [184, 665, '4700'], [184, 828, '3300'], [184, 1005, '5500'], [184, 1167, '2600'], [184, 1327, '5400'], [184, 1488, '2700'], [184, 1577, '1800'], [184, 1740, '6200'], [145, 1083, '27000'], [2398, 1083, '27000']];

    function drawPlan() {
      columns.forEach(([x, y, w, h]) => add(plan, 'rect', { class: 'pillar', x, y, width: w, height: h }));
      add(plan, 'path', { class: 'pillar', d: 'M760 510H775L795 530V545H760ZM1114 510H1099L1084 528V543H1114Z' });
      outlets.forEach(([x, y, a]) => {
        add(plan, 'path', { class: 'g', transform: `translate(${x} ${y}) rotate(${a})`, d: 'M-9 2V-6H9V2M0-12V6M-4 6H4V1H-4Z' });
      });
      bubbles.forEach(([x, y, t]) => {
        add(plan, 'circle', { class: 'g bubble', cx: x, cy: y, r: 16 });
        add(plan, 'text', { class: t.length > 2 ? 'axis small' : 'axis', x, y: y + (t.length > 2 ? 6 : 8) }, t);
      });
      marks.forEach(([x, y], i) => add(plan, 'text', { class: 'mark', x, y: y + 6 }, 'FPJD'[i % 4]));
      labels.forEach(([x, y, t]) => add(plan, 'text', { class: 'label', x, y }, t));
      dims.forEach(([x, y, t]) => add(plan, 'text', { class: 'dim', x, y }, t));
      sideDims.forEach(([x, y, t]) => add(plan, 'text', { class: 'dim', transform: `translate(${x} ${y}) rotate(-90)` }, t));
    }

    document.getElementById('rows').innerHTML = '<tr><td></td><td></td><td></td><td></td></tr>'.repeat(15);
    drawGrid();
    drawPlan();
  </script>
</body>
</html>
```
FILE: styles.css
```css
* {
  box-sizing: border-box;
}

body {
  margin: 0;
  height: 100vh;
  display: flex;
  flex-direction: column;
  position: relative;
  overflow: hidden;
  font-family: "Noto Sans", "Noto Sans CJK SC", sans-serif;
  font-size: 14px;
  line-height: 20px;
  color: #111;
  background: #e6e8eb;
}

button, input, select {
  font: inherit;
  color: inherit;
  border: none;
  background: none;
  padding: 0;
  margin: 0;
  border-radius: 0;
}

select {
  appearance: none;
  min-width: 0;
  flex: 1;
}

a {
  color: inherit;
  text-decoration: none;
}

svg {
  flex: none;
  display: block;
}

.icon {
  width: 20px;
  height: 20px;
}

/* 标题栏 */
.header {
  display: flex;
  height: 73px;
  background: #356bb3;
  color: #fff;
}

.avatar {
  width: 76px;
  padding: 8px 0 0 11px;
}

.header-main {
  flex: 1;
  display: flex;
  flex-direction: column;
}

.quick-bar {
  display: flex;
  align-items: center;
  gap: 10px;
  height: 45px;
  padding: 0 8px 4px 5px;
}

.quick {
  display: flex;
  align-items: center;
  gap: 8px;
}

.quick-sep {
  width: 1px;
  height: 30px;
  background: #c9dbf0;
}

.window-bar {
  display: flex;
  align-items: center;
  gap: 10px;
  margin-left: auto;
}

.menu-tabs {
  display: flex;
  gap: 1px;
  height: 28px;
}

.menu-tab {
  width: 88px;
  line-height: 32px;
  text-align: center;
  color: #c4dcf6;
  background: #3061a4;
}

.menu-tab.active {
  color: #0a84f0;
  background: #f0f0f0;
  border-radius: 3px 3px 0 0;
}

/* 功能区 */
.ribbon {
  display: flex;
  height: 89px;
  background: #f0f0f0;
  border-right: 2px solid #000;
}

.sep {
  width: 1px;
  height: 64px;
  margin-top: 12px;
  background: #c6c8cb;
}

.big {
  display: flex;
  flex-direction: column;
  align-items: center;
  gap: 9px;
  width: 46px;
  padding-top: 15px;
  white-space: nowrap;
}

.big.wide {
  width: 72px;
  margin-left: 6px;
}

.big.first {
  margin-left: 4px;
}

.big.count {
  width: 47px;
}

.big.phone {
  width: 66px;
}

.big.send {
  width: 48px;
}

.big.layer {
  width: 45px;
}

.big-icon {
  width: 30px;
  height: 30px;
}

.big .more {
  margin-top: -8px;
}

.tools {
  display: grid;
  grid-template-rows: 34px 34px;
  gap: 1px 0;
  align-content: start;
  padding-top: 9px;
}

.measure {
  grid-template-columns: 66px 67px 67px 100px 100px 69px;
}

.notes {
  width: 67px;
}

.tool {
  display: flex;
  align-items: center;
  gap: 5px;
  padding: 0 6px;
  white-space: nowrap;
}

.tool.selected {
  background: #d3d4d8;
  border-radius: 2px;
}

.layer-tools {
  width: 163px;
  padding-top: 8px;
}

.layer-box {
  display: flex;
  align-items: center;
  gap: 5px;
  height: 35px;
  padding: 0 9px 0 4px;
  background: #fff;
  border: 1px solid #cfcfcf;
}

.swatch {
  width: 16px;
  height: 16px;
  border: 1px solid #000;
  background: #fff;
}

.layer-box select {
  padding-left: 3px;
}

.layer-actions {
  display: flex;
  justify-content: space-between;
  height: 34px;
  margin-top: 1px;
}

.layer-actions .tool {
  gap: 3px;
}

.props {
  display: grid;
  grid-template-columns: 20px 28px 116px;
  grid-auto-rows: 24px;
  gap: 2px 6px;
  align-items: center;
  align-content: start;
  padding: 7px 0 0 11px;
}

.color-wheel {
  display: block;
  width: 20px;
  height: 20px;
  border: 1px solid #888;
  border-radius: 50%;
  background: conic-gradient(#f7a, #f8946a, #e8e070, #7fdc7c, #5ed6d8, #5a7cf2, #b25cf0, #f7a);
}

.prop-box {
  display: flex;
  align-items: center;
  gap: 6px;
  height: 24px;
  padding: 0 5px 0 3px;
  font-size: 12px;
  background: #fff;
  border: 1px solid #cfcfcf;
}

.line-sample {
  width: 38px;
  border-top: 1px solid #000;
}

.line-sample.low {
  margin-top: 10px;
}

/* 工作区 */
.workspace {
  flex: 1;
  display: flex;
  min-height: 0;
}

.sidebar {
  width: 49px;
  padding: 41px 3px 0 0;
  color: #333;
}

.sidebar a {
  display: flex;
  flex-direction: column;
  align-items: center;
  gap: 4px;
  height: 61px;
}

.main {
  flex: 1;
  display: flex;
  flex-direction: column;
  min-width: 0;
}

.doc-tabs {
  display: flex;
  align-items: flex-end;
  height: 32px;
  background: #e4e5e9;
  border-bottom: 1px solid #000;
  border-right: 2px solid #000;
}

.doc-tab {
  display: flex;
  align-items: center;
  justify-content: space-between;
  width: 192px;
  height: 30px;
  padding: 0 10px 0 13px;
  color: #fff;
  background: #356bb3;
}

.new-doc {
  height: 30px;
  padding-left: 7px;
}

.stage {
  flex: 1;
  display: flex;
  min-height: 0;
}

.canvas {
  flex: 1;
  position: relative;
  min-width: 0;
  overflow: hidden;
  background: #00152d;
}

.prompt {
  position: absolute;
  top: 0;
  left: 573px;
  right: 129px;
  height: 38px;
  line-height: 40px;
  text-align: center;
  background: #f0f0f0;
  border-radius: 0 0 3px 3px;
}

/* 图纸 */
.drawing {
  width: 100%;
  height: 100%;
  shape-rendering: crispEdges;
}

.minor { fill: none; stroke: #1c2941; }
.major { fill: none; stroke: #45486a; }
.g { fill: none; stroke: #0f0; }
.c { fill: none; stroke: #0ff; }
.y { fill: none; stroke: #ff0; }
.m { fill: none; stroke: #f0f; }
.w { fill: none; stroke: #fff; }
.r { fill: none; stroke: #f00; }
.hatch { fill: none; stroke: #063a1c; stroke-width: 3; stroke-dasharray: 22 8; }
.pillar { fill: #c0c0c0; stroke: none; }
.bubble { shape-rendering: auto; }

.drawing text {
  fill: #fff;
  text-anchor: middle;
  font-weight: bold;
}

.drawing .axis { font-size: 23px; }
.drawing .axis.small { font-size: 15px; }
.drawing .mark { font-size: 18px; }
.drawing .label { font-size: 19px; }
.drawing .dim { font-size: 15px; }
.drawing .plan-title {
  fill: #ff0;
  text-anchor: start;
  font-family: "Liberation Serif", "Noto Sans CJK SC", serif;
  font-size: 45px;
}
.drawing .plan-title.scale { font-size: 36px; }

/* 算量统计表 */
.panel {
  display: flex;
  flex-direction: column;
  width: 445px;
  background: #fff;
  border: 1px solid #0b82ee;
}

.panel-head {
  display: flex;
  align-items: center;
  justify-content: space-between;
  height: 38px;
  padding: 0 13px 4px 15px;
  background: #f1f2f5;
  color: #333;
}

.panel-head h2 {
  margin: 0;
  font-size: 15px;
}

.panel-tools {
  display: flex;
  gap: 5px;
  padding: 13px 0 13px 13px;
}

.panel-tools label {
  width: 33px;
  padding-top: 7px;
  white-space: nowrap;
  color: #333;
}

.panel-tools button,
.category-box {
  height: 30px;
  background: #f1f2f5;
  border: 1px solid #bdbfc3;
  border-radius: 2px;
}

.category-box {
  display: flex;
  align-items: center;
  width: 92px;
  padding: 0 5px 0 2px;
  color: #555;
  border-color: #d0d2d6;
}

.panel-tools .b-add { width: 66px; }
.panel-tools .b-clear { width: 52px; color: #a9abaf; }
.panel-tools .b-insert { width: 72px; }
.panel-tools .b-export { width: 76px; }

.table-box {
  flex: 1;
  display: flex;
  min-height: 0;
  margin: 0 12px 13px 12px;
  padding-right: 1px;
  box-shadow: inset 0 0 0 1px #c8c8c8;
}

.table-clip {
  flex: 1;
  margin-right: 6px;
  overflow: hidden;
}

table {
  width: 100%;
  border-collapse: collapse;
  table-layout: fixed;
}

.c-type { width: 81px; }
.c-desc { width: 128px; }
.c-value { width: 140px; }

th, td {
  height: 38px;
  padding: 0 4px;
  text-align: left;
  border: 1px solid #c8c8c8;
}

th {
  font-size: 15px;
}

.title, .sub {
  text-align: center;
}

.sub {
  position: relative;
}

.tick {
  position: absolute;
  right: 8px;
  top: 14px;
}

.cols th {
  background: #f4f4f4;
}

.scrollbar {
  display: flex;
  flex-direction: column;
  width: 16px;
  margin: 1px 0;
  background: #f0f0f0;
}

.thumb {
  height: 79%;
  margin-bottom: auto;
  background: #cdcdcd;
}

/* 命令行与状态栏 */
.command {
  display: flex;
  height: 33px;
  border-top: 2px solid #000;
  border-right: 2px solid #000;
  background: #f1f1f1;
}

.command-list {
  display: flex;
  align-items: center;
  gap: 12px;
  width: 112px;
  padding-left: 9px;
  background: #e4e5e9;
  border: 1px solid #c6c8cb;
}

.command input {
  flex: 1;
  padding: 0 0 4px 8px;
  font-size: 12px;
  border: 1px solid #c6c8cb;
  border-left: none;
}

input::placeholder {
  color: #999;
  opacity: 1;
}

.status {
  display: flex;
  height: 32px;
  border-right: 2px solid #000;
}

.layout-tab {
  width: 78px;
  padding: 9px 3px 0 0;
  text-align: center;
  border-right: 1px solid #c6c8cb;
}

.layout-tab.active {
  width: 72px;
  color: #0a84f0;
  background: #d3d4d8;
}

.add-layout {
  display: flex;
  align-items: center;
  justify-content: center;
  width: 40px;
  padding-top: 8px;
  border-right: 1px solid #c6c8cb;
}

.search {
  display: flex;
  height: 28px;
  margin: 4px 15px 0 auto;
}

.search input {
  width: 205px;
  padding: 0 0 3px 1px;
  font-size: 12px;
  background: #fff;
  border: 1px solid #b5b7ba;
  border-bottom: none;
}

.search button {
  display: flex;
  align-items: center;
  justify-content: center;
  width: 60px;
  background: #d8d9dc;
  border: 1px solid #bbb;
}

.switches {
  display: flex;
  gap: 4px;
  padding-top: 4px;
}

.switches button {
  display: flex;
  align-items: center;
  justify-content: center;
  width: 30px;
}

.switches .on {
  background: #d0d2d7;
}

.ime {
  position: absolute;
  left: 56%;
  bottom: 0;
  display: flex;
  align-items: center;
  justify-content: center;
  gap: 4px;
  width: 63px;
  height: 25px;
  font-size: 13px;
  color: #333;
  background: #fff;
  border: 1px solid #aaa;
  border-radius: 5px 5px 3px 3px;
  box-shadow: 0 0 3px rgba(0, 0, 0, 0.5);
}

.arrows {
  position: absolute;
  left: 730px;
  top: 170px;
  pointer-events: none;
}

.arrow-shape {
  filter: drop-shadow(2px 3px 2px rgba(0, 0, 0, 0.5));
}

/* 水印 */
.watermark {
  position: absolute;
  right: 10px;
  bottom: 6px;
  display: flex;
  justify-content: space-between;
  width: 465px;
  height: 113px;
  background: rgba(255, 255, 255, 0.6);
  pointer-events: none;
}

.site {
  display: flex;
  flex-direction: column;
  padding-left: 12px;
  white-space: nowrap;
}

.site strong {
  font-size: 49px;
  line-height: 64px;
  color: #ff2d2d;
}

.site span {
  font-family: "Liberation Serif", serif;
  font-size: 36px;
  font-weight: bold;
  line-height: 48px;
  color: #2a7cf8;
}

.tag {
  position: relative;
  width: 189px;
  border-radius: 28px;
  background: rgba(26, 115, 255, 0.92);
  color: #fff;
  font-family: "Open Sans", sans-serif;
  font-weight: 600;
  font-size: 90px;
  line-height: 110px;
  text-align: center;
}

.ghost {
  position: absolute;
  right: 1px;
  bottom: 0;
  font-family: "Noto Sans", "Noto Sans CJK SC", sans-serif;
  font-size: 20px;
  line-height: 22px;
  color: rgba(20, 70, 150, 0.3);
}

.ghost b, .ghost i {
  display: block;
  font-style: normal;
}

.ghost i {
  font-size: 14px;
}
```
